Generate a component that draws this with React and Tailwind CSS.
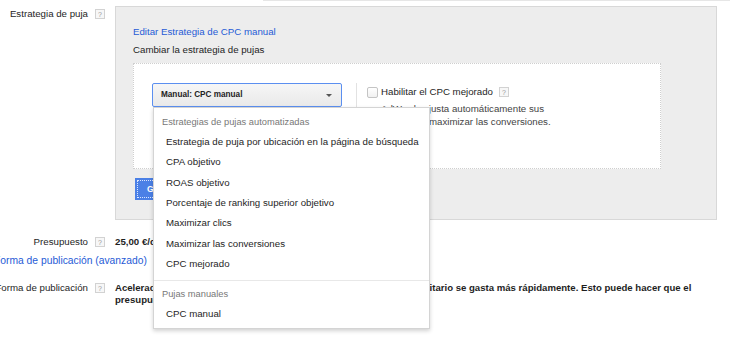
import React from "react";

function Help({ className = "" }) {
  return (
    <span
      className={
        "inline-flex w-[10px] h-[10px] shrink-0 items-center justify-center border border-[#d2d2d2] bg-[#f7f7f7] text-[7px] leading-none text-[#999] " +
        className
      }
    >
      ?
    </span>
  );
}

function Label({ children }) {
  return (
    <div className="w-[115px] shrink-0 flex items-center">
      <div className="w-[88px] flex justify-end whitespace-nowrap text-[#1e1e1e]">{children}</div>
      <Help className="ml-[7px]" />
    </div>
  );
}

const autoItems = [
  "Estrategia de puja por ubicación en la página de búsqueda",
  "CPA objetivo",
  "ROAS objetivo",
  "Porcentaje de ranking superior objetivo",
  "Maximizar clics",
  "Maximizar las conversiones",
  "CPC mejorado",
];

export default function App() {
  return (
    <div
      className="relative w-[730px] h-[351px] overflow-hidden bg-white text-[9.7px] leading-[12px] text-[#1e1e1e]"
      style={{ fontFamily: '"Liberation Sans", Arial, sans-serif' }}
    >
      <div className="ml-[263px] h-px bg-[#e6e6e6]" />

      {/* Estrategia de puja row */}
      <div className="flex items-start mt-[5px]">
        <div className="pt-[2px]">
          <Label>Estrategia de puja</Label>
        </div>
        <div className="w-[602px] h-[214px] border border-[#d8d8d8] bg-[#ededed] pl-[17px] pt-[19px]">
          <div className="text-[#1f5bd6]">Editar Estrategia de CPC manual</div>
          <div className="mt-[6px]">Cambiar la estrategia de pujas</div>
          <div className="mt-[7px] w-[528px] h-[106px] border border-dotted border-[#cfcfcf] bg-white pl-[18px] pt-[19px] flex items-start">
            <div className="w-[190px] h-[24px] border border-[#5b8ff0] rounded-[2px] bg-gradient-to-b from-[#f6f6f6] to-[#e9e9e9] flex items-center justify-between pl-[8px] pr-[9px]">
              <span className="text-[8.2px] font-bold text-[#222]">Manual: CPC manual</span>
              <span className="w-0 h-0 border-l-[3px] border-r-[3px] border-t-[3px] border-l-transparent border-r-transparent border-t-[#555]" />
            </div>
            <div className="ml-[14px] w-px h-[70px] bg-[#e2e2e2]" />
            <div className="ml-[10px] pt-[3px]">
              <div className="flex items-center">
                <span className="w-[11px] h-[11px] rounded-[2px] border border-[#c4c4c4] bg-gradient-to-b from-white to-[#f1f1f1]" />
                <span className="ml-[3px]">Habilitar el CPC mejorado</span>
                <Help className="ml-[6px]" />
              </div>
              <div className="mt-[4px] pl-[14px] leading-[13px] text-[#444] whitespace-nowrap">
                <div>AdWords ajusta automáticamente sus</div>
                <div>pujas para maximizar las conversiones.</div>
              </div>
            </div>
          </div>
          <div className="mt-[9px] ml-[2px] w-[62px] h-[22px] bg-[#4b80e6] outline outline-1 outline-dotted outline-offset-[-3px] outline-[#dbe6ff] flex items-center pl-[12px] text-[8.5px] font-bold text-white">
            Guardar
          </div>
        </div>
      </div>

      {/* Presupuesto */}
      <div className="flex items-center mt-[16px]">
        <Label>Presupuesto</Label>
        <span className="font-bold whitespace-nowrap">25,00 €/día</span>
      </div>

      {/* Link */}
      <div className="mt-[7px] -ml-[6px] text-[10.3px] text-[#1f5bd6] whitespace-nowrap">
        Forma de publicación (avanzado)
      </div>

      {/* Forma de publicación */}
      <div className="flex items-start mt-[15px]">
        <Label>Forma de publicación</Label>
        <div className="font-bold whitespace-nowrap text-[9.6px]">
          <div>
            Acelerada: los anuncios se publican lo antes y el presupuesto publicitario se gasta más rápidamente. Esto puede hacer que el
          </div>
          <div>presupuesto se agote antes de que termine el día.</div>
        </div>
      </div>

      {/* Dropdown menu */}
      <div className="absolute left-[153px] top-[107px] w-[277px] h-[222px] border border-[#d4d4d4] bg-white shadow-[0_2px_4px_rgba(0,0,0,0.18)] pt-[4px]">
        <div className="h-[20px] flex items-center pl-[8px] text-[9.3px] text-[#777] whitespace-nowrap">
          Estrategias de pujas automatizadas
        </div>
        {autoItems.map((t) => (
          <div key={t} className="h-[20.33px] flex items-center pl-[12px] whitespace-nowrap">
            {t}
          </div>
        ))}
        <div className="mt-[6px] h-px bg-[#e8e8e8]" />
        <div className="mt-[3px] h-[20px] flex items-center pl-[8px] text-[9.3px] text-[#777] whitespace-nowrap">
          Pujas manuales
        </div>
        <div className="h-[19px] flex items-center pl-[12px] whitespace-nowrap">CPC manual</div>
      </div>
    </div>
  );
}
